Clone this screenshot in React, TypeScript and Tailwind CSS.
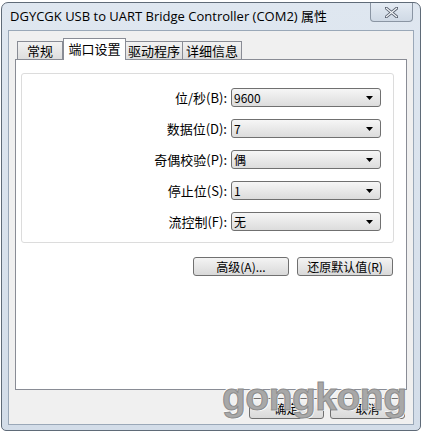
import React from "react";

const cjk = { fontFamily: '"Noto Sans CJK SC", "Noto Sans", sans-serif' };

function Combo({ value }: { value: string }) {
  return (
    <div className="w-[150px] h-[19px] rounded-[3px] border border-[#707070] bg-gradient-to-b from-[#f6f6f6] to-[#dcdcdc] flex items-center justify-between pl-[2px] pr-[7px]">
      <span className="text-[12px] leading-none text-black" style={cjk}>{value}</span>
      <svg width="7" height="4" viewBox="0 0 7 4"><path d="M0 0h7L3.5 4z" fill="#000" /></svg>
    </div>
  );
}

function Btn({ label, w }: { label: string; w: string }) {
  return (
    <div className={`${w} h-[19px] rounded-[3px] border border-[#707070] bg-gradient-to-b from-[#f4f4f4] to-[#d9d9d9] flex items-center justify-center text-[12px] leading-none text-black`} style={cjk}>
      {label}
    </div>
  );
}

export default function App() {
  const rows = [
    ["位/秒(B):", "9600"],
    ["数据位(D):", "7"],
    ["奇偶校验(P):", "偶"],
    ["停止位(S):", "1"],
    ["流控制(F):", "无"],
  ];
  return (
    <div className="w-[424px] h-[433px] bg-white pl-[1px] pr-[3px] pt-[2px] pb-[2px] relative overflow-hidden">
      <div className="h-full rounded-t-[7px] rounded-b-[5px] border border-[#5f6b78] bg-gradient-to-b from-[#dfe7f0] to-[#d3dde9] flex flex-col px-[6px] pb-[5px]">
        <div className="h-[27px] flex items-center justify-between pl-[2px] shrink-0">
          <span className="text-[13px] text-black whitespace-nowrap" style={{ fontFamily: '"Open Sans", "Noto Sans CJK SC", sans-serif' }}>
            DGYCGK USB to UART Bridge Controller (COM2) 属性
          </span>
          <div className="self-start w-[43px] h-[19px] rounded-b-[4px] border border-t-0 border-[#8a95a3] bg-gradient-to-b from-[#e4ebf3] to-[#cfd9e5] flex items-center justify-center mr-[1px]">
            <svg width="13" height="11" viewBox="0 0 13 11">
              <path d="M1 1 L12 10 M12 1 L1 10" stroke="#5a6270" strokeWidth="3" strokeLinecap="square" />
              <path d="M1 1 L12 10 M12 1 L1 10" stroke="#f2f5f8" strokeWidth="1.2" />
            </svg>
          </div>
        </div>
        <div className="flex-1 border border-[#9aa8b8] bg-[#f0f0f0] flex flex-col px-[6px] pt-[7px]">
          <div className="flex items-end pl-[2px] h-[21px] relative z-10" style={cjk}>
            <div className="w-[46px] h-[18px] border border-b-0 border-[#898c95] bg-gradient-to-b from-[#f2f2f2] to-[#dedede] flex items-center justify-center text-[13px] leading-none">常规</div>
            <div className="w-[63px] h-[22px] -mb-[1px] border border-b-0 border-[#898c95] bg-white flex items-start justify-center pt-[3px] text-[13px] leading-none">端口设置</div>
            <div className="w-[57px] h-[18px] border border-b-0 border-l-0 border-[#898c95] bg-gradient-to-b from-[#f2f2f2] to-[#dedede] flex items-center justify-center text-[13px] leading-none">驱动程序</div>
            <div className="w-[59px] h-[18px] border border-b-0 border-l-0 border-[#898c95] bg-gradient-to-b from-[#f2f2f2] to-[#dedede] flex items-center justify-center text-[13px] leading-none">详细信息</div>
          </div>
          <div className="h-[331px] border border-[#898c95] bg-white flex flex-col pl-[5px] pr-[12px] pt-[13px]">
            <div className="h-[170px] rounded-[3px] border border-[#dcdcdc] flex flex-col pt-[14px] gap-[12px]">
              {rows.map(([l, v]) => (
                <div key={l} className="flex items-center justify-end pr-[12px] gap-[4px]">
                  <span className="text-[13px] leading-none text-black" style={cjk}>{l}</span>
                  <Combo value={v} />
                </div>
              ))}
            </div>
            <div className="flex justify-end gap-[8px] pr-[1px] mt-[14px]">
              <Btn label="高级(A)..." w="w-[96px]" />
              <Btn label="还原默认值(R)" w="w-[96px]" />
            </div>
          </div>
          <div className="flex justify-end gap-[6px] pr-[2px] mt-[8px]">
            <Btn label="确定" w="w-[75px] h-[21px]" />
            <Btn label="取消" w="w-[75px] h-[21px]" />
          </div>
        </div>
      </div>
      <div
        className="absolute left-[222px] top-[377px] text-[39px] font-bold text-[#a8a8a8] leading-none pointer-events-none tracking-[-0.5px]"
        style={{ fontFamily: '"Liberation Sans", Arial, sans-serif', WebkitTextStroke: "1px #8c8c8c", textShadow: "1px 1px 0 #fff, -1px -1px 0 #fff" }}
      >
        gongkong
      </div>
    </div>
  );
}
